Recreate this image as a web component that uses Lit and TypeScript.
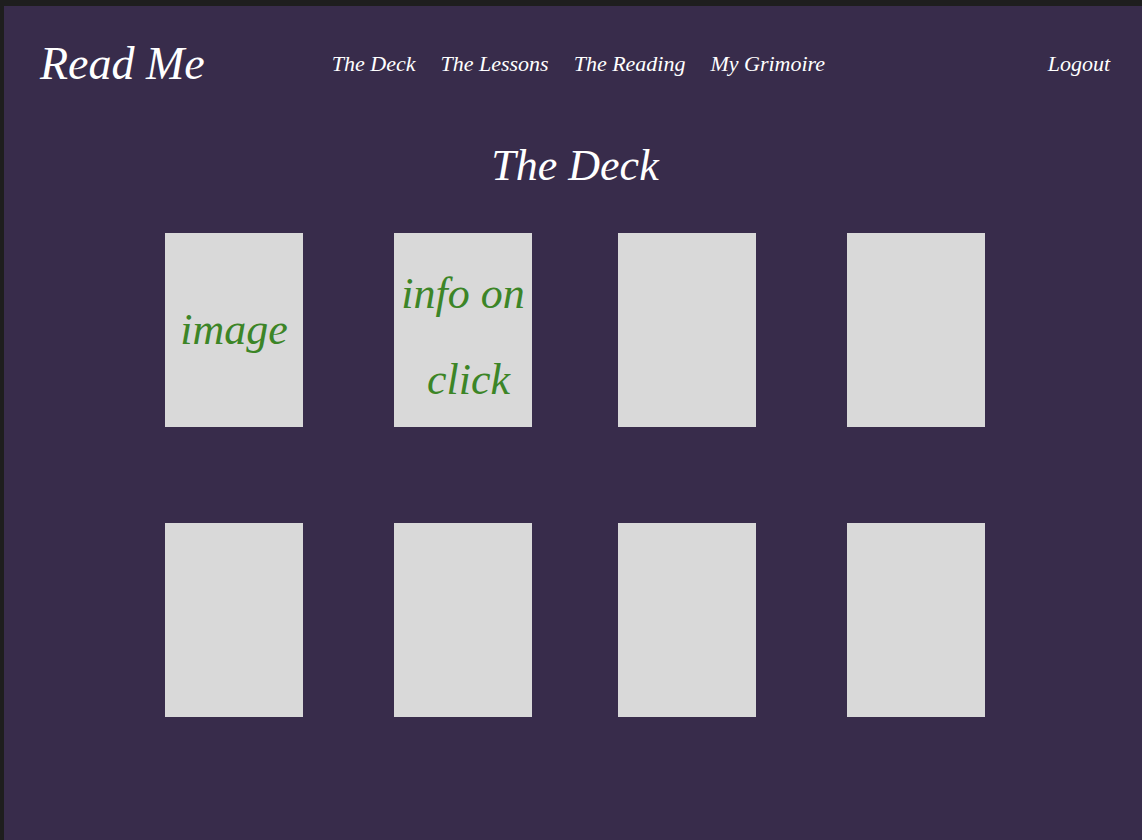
import { LitElement, html, css } from "lit";
import { customElement, state } from "lit/decorators.js";

interface Card {
  text: string;
}

@customElement("tarot-card")
class TarotCard extends LitElement {
  static properties = { text: { type: String }, name: { type: String } };
  declare text: string;
  declare name: string;

  static styles = css`
    :host {
      display: block;
    }
    .card {
      display: flex;
      align-items: center;
      justify-content: center;
      width: 138px;
      min-height: 194px;
      margin: 0;
      padding: 0;
      border: 0;
      border-radius: 0;
      background: #d9d9d9;
      color: #3c8527;
      font: italic 44px/86px "Liberation Serif", serif;
      white-space: pre;
      text-align: center;
      cursor: pointer;
    }
    .tall {
      padding-top: 14px;
    }
  `;

  render() {
    const tall = this.text.includes("\n") ? "tall" : "";
    return html`<button class="card ${tall}" type="button" aria-label=${this.text.trim() || this.name}>${this.text}</button>`;
  }
}

@customElement("app-root")
class AppRoot extends LitElement {
  @state() private links = ["The Deck", "The Lessons", "The Reading", "My Grimoire"];

  @state() private pairs: Card[][] = [
    [{ text: "image" }, { text: "info on\n click" }],
    [{ text: "" }, { text: "" }],
    [{ text: "" }, { text: "" }],
    [{ text: "" }, { text: "" }],
  ];

  static styles = css`
    :host {
      display: block;
      box-sizing: border-box;
      min-height: 100vh;
      border-top: 6px solid #1e1e1e;
      border-left: 4px solid #1e1e1e;
      background: #382c4b;
      color: #fff;
      font-family: "Liberation Serif", serif;
      font-style: italic;
    }
    a {
      color: inherit;
      text-decoration: none;
    }
    .header {
      display: flex;
      align-items: center;
      padding: 28px 32px 0 36px;
      font-size: 22px;
      line-height: 60px;
    }
    .logo {
      margin-right: 127px;
      font-size: 46px;
      white-space: nowrap;
    }
    .nav {
      display: flex;
      flex-wrap: wrap;
      gap: 0 25px;
    }
    .logout {
      margin-left: auto;
    }
    .main {
      padding: 42px 28px 60px 32px;
    }
    .title {
      margin: 0 0 37px;
      font-size: 44px;
      font-weight: 400;
      line-height: 60px;
      text-align: center;
    }
    .deck {
      display: flex;
      flex-wrap: wrap;
      justify-content: center;
      gap: 96px 86px;
      max-width: 900px;
      margin: 0 auto;
    }
    .pair {
      display: flex;
      gap: 91px;
    }
  `;

  render() {
    return html`
      <header class="header">
        <a class="logo" href="#home">Read Me</a>
        <nav class="nav" aria-label="Main">
          ${this.links.map((l) => html`<a href="#${l.toLowerCase().replace(" ", "-")}">${l}</a>`)}
        </nav>
        <a class="logout" href="#logout">Logout</a>
      </header>
      <main class="main">
        <h1 class="title">The Deck</h1>
        <div class="deck">
          ${this.pairs.map(
            (pair, p) => html`<div class="pair">
              ${pair.map((c, i) => html`<tarot-card .text=${c.text} .name=${`Card ${p * 2 + i + 1}`}></tarot-card>`)}
            </div>`
          )}
        </div>
      </main>
    `;
  }
}
